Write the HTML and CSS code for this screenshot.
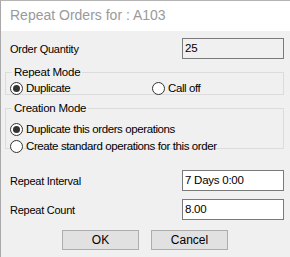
FILE: index.html
```html
<!DOCTYPE html>
<html lang="en">
<head>
    <meta charset="UTF-8">
    <title>Repeat Orders</title>
    <link rel="stylesheet" href="styles.css">
</head>
<body>
    <div class="window">
        <div class="titlebar">Repeat Orders for : A103</div>

        <div class="dialog">
            <div class="field-row first">
                <span class="label">Order Quantity</span>
                <div class="textbox readonly">25</div>
            </div>

            <fieldset class="group repeat-mode">
                <legend>Repeat Mode</legend>
                <div class="radio-line">
                    <span class="option wide"><span class="radio checked"></span>Duplicate</span>
                    <span class="option"><span class="radio"></span>Call off</span>
                </div>
            </fieldset>

            <fieldset class="group creation-mode">
                <legend>Creation Mode</legend>
                <div class="radio-stack">
                    <span class="option"><span class="radio checked"></span>Duplicate this orders operations</span>
                    <span class="option"><span class="radio"></span>Create standard operations for this order</span>
                </div>
            </fieldset>

            <div class="field-row interval">
                <span class="label">Repeat Interval</span>
                <div class="textbox">7 Days 0:00</div>
            </div>

            <div class="field-row count">
                <span class="label">Repeat Count</span>
                <div class="textbox">8.00</div>
            </div>

            <div class="buttons">
                <button class="btn ok">OK</button>
                <button class="btn cancel">Cancel</button>
            </div>
        </div>
    </div>
</body>
</html>
```

FILE: styles.css
```css
html, body {
    margin: 0;
    padding: 0;
}

body {
    width: 290px;
    height: 257px;
    overflow: hidden;
    font-family: "Liberation Sans", Arial, sans-serif;
    font-size: 11px;
    letter-spacing: -0.25px;
    color: #000;
    background: #f0f0f0;
}

.window {
    height: 257px;
    box-sizing: border-box;
    border-top: 1px solid #b4b4b4;
    border-left: 1px solid #a8a8a8;
    background: #f0f0f0;
}

.titlebar {
    height: 30px;
    background: #fff;
    color: #9a9a9a;
    font-size: 14px;
    letter-spacing: 0;
    line-height: 29px;
    padding-left: 9px;
}

.dialog {
    padding: 7px 6px 0 4px;
}

/* label + textbox rows */
.field-row {
    display: flex;
    align-items: center;
    justify-content: space-between;
    height: 21px;
    padding-left: 5px;
}

.interval {
    margin-top: 21px;
}

.count {
    margin-top: 8px;
}

.textbox {
    width: 98px;
    height: 19px;
    border: 1px solid #7a7a7a;
    background: #fff;
    line-height: 19px;
    padding-left: 2px;
    font-size: 11.5px;
}

.textbox.readonly {
    background: #f0f0f0;
}

/* group boxes */
.group {
    margin: 0;
    border: 1px solid #dcdcdc;
    border-radius: 0;
    padding: 0 4px 0 4px;
}

.group legend {
    padding: 0 2px;
    margin-left: 2px;
    line-height: 14px;
    font-size: 11.5px;
}

.repeat-mode {
    margin-top: 6px;
    height: 30px;
    box-sizing: border-box;
}

.creation-mode {
    margin-top: 6px;
    height: 48px;
    box-sizing: border-box;
}

.radio-line {
    display: flex;
    margin-top: 2px;
}

.radio-stack {
    display: flex;
    flex-direction: column;
    gap: 3px;
    margin-top: 7px;
}

.option {
    display: flex;
    align-items: center;
    height: 14px;
    white-space: nowrap;
    font-size: 11.5px;
    letter-spacing: -0.4px;
}

.option.wide {
    width: 142px;
}

.radio {
    width: 11px;
    height: 11px;
    border: 1px solid #333;
    border-radius: 50%;
    background: #fff;
    margin-right: 3px;
    position: relative;
    flex: none;
}

.radio.checked::after {
    content: "";
    position: absolute;
    left: 2px;
    top: 2px;
    width: 7px;
    height: 7px;
    border-radius: 50%;
    background: #333;
}

/* buttons */
.buttons {
    display: flex;
    gap: 12px;
    margin-top: 10px;
    padding-left: 57px;
}

.btn {
    width: 77px;
    height: 20px;
    margin: 0;
    padding: 0;
    border: 1px solid #adadad;
    background: #e1e1e1;
    font-family: inherit;
    font-size: 12px;
    color: #000;
}
```
